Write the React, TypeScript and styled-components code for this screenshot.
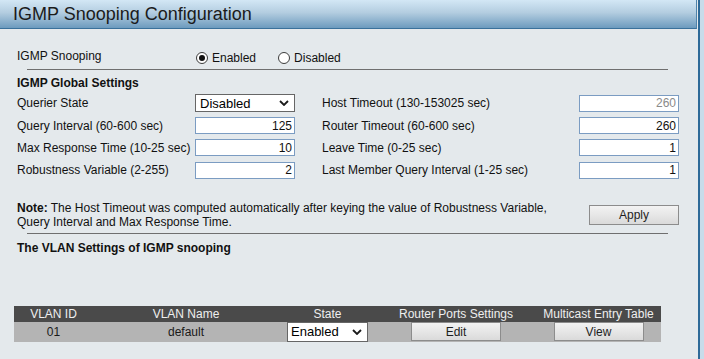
import React from "react";
import styled, { createGlobalStyle } from "styled-components";

const GlobalStyle = createGlobalStyle`
  html, body {
    margin: 0;
    padding: 0;
    background: #e4e9ec;
  }
  body {
    font-family: "Liberation Sans", Arial, sans-serif;
    font-size: 12px;
    color: #111;
  }
  * { box-sizing: border-box; }
`;

const Page = styled.div`
  display: flex;
  width: 704px;
  height: 359px;
  overflow: hidden;
`;

const Main = styled.div`
  width: 698px;
  display: flex;
  flex-direction: column;
  background: #e4e9ec;
`;

const Edge = styled.div`
  width: 2px;
  background: #2e6a98;
`;

const Strip = styled.div`
  flex: 1;
  background: #c8dcea;
`;

const TitleBar = styled.div`
  width: 697px;
  height: 29px;
  border-bottom: 1px solid #3a719b;
  border-right: 1px solid #4f83aa;
  background: linear-gradient(to bottom, #d3e7f5 0%, #b3cde0 45%, #6d9bbe 100%);
  display: flex;
  align-items: center;
`;

const TitleText = styled.h1`
  margin: 0;
  padding-left: 13px;
  font-size: 18px;
  font-weight: normal;
  line-height: 27px;
  color: #1b1b1b;
`;

const Content = styled.div`
  padding-left: 14px;
  display: flex;
  flex-direction: column;
`;

const Form = styled.div`
  padding-left: 3px;
  display: flex;
  flex-direction: column;
`;

const SnoopRow = styled.div`
  display: flex;
  align-items: center;
  height: 20px;
  margin-top: 17px;
`;

const RowLabel = styled.div`
  width: 179px;
`;

const RadioGroup = styled.div`
  display: flex;
  align-items: center;
  margin-top: 3px;
  gap: 22px;
`;

const RadioOption = styled.label`
  display: flex;
  align-items: center;
  gap: 4px;
`;

const RadioCircle = styled.span<{ $checked?: boolean }>`
  width: 12px;
  height: 12px;
  border-radius: 50%;
  border: 1px solid #3c3c3c;
  background: #fff;
  display: flex;
  align-items: center;
  justify-content: center;
  &::after {
    content: "";
    width: 6px;
    height: 6px;
    border-radius: 50%;
    background: ${(p) => (p.$checked ? "#111" : "transparent")};
  }
`;

const Rule = styled.div<{ $mt: number }>`
  margin-top: ${(p) => p.$mt}px;
  margin-left: 10px;
  width: 641px;
  height: 1px;
  background: #6f6f6f;
`;

const SectionTitle = styled.div<{ $mt: number }>`
  margin-top: ${(p) => p.$mt}px;
  font-weight: bold;
  line-height: 14px;
`;

const SettingsGrid = styled.div`
  margin-top: 2px;
  display: grid;
  grid-template-columns: 178px 100px 284px 100px;
  grid-auto-rows: 22.4px;
  align-items: center;
`;

const FieldLabel = styled.div<{ $indent?: boolean }>`
  padding-left: ${(p) => (p.$indent ? "27px" : "0")};
  white-space: nowrap;
`;

const TextInput = styled.input<{ $muted?: boolean }>`
  width: 100px;
  height: 17px;
  border: 1px solid #7b9cc2;
  background: #fff;
  text-align: right;
  padding: 0 2px;
  font-family: "Liberation Sans", Arial, sans-serif;
  font-size: 12px;
  color: ${(p) => (p.$muted ? "#8a8a8a" : "#111")};
  outline: none;
`;

const SelectWrap = styled.div<{ $w: number; $h: number }>`
  position: relative;
  width: ${(p) => p.$w}px;
  height: ${(p) => p.$h}px;
`;

const Select = styled.select<{ $pl: number }>`
  appearance: none;
  -webkit-appearance: none;
  width: 100%;
  height: 100%;
  border: 1px solid #666;
  border-radius: 0;
  background: #fff;
  padding: 0 0 0 ${(p) => p.$pl}px;
  font-family: "Liberation Sans", Arial, sans-serif;
  font-size: 13px;
  color: #000;
  outline: none;
`;

const ChevronIcon = styled.svg`
  position: absolute;
  right: 6px;
  top: 50%;
  margin-top: -3px;
  pointer-events: none;
`;

const Chevron = () => (
  <ChevronIcon width="10" height="6" viewBox="0 0 10 6">
    <path d="M1 1 L5 5 L9 1" fill="none" stroke="#1a1a1a" strokeWidth="1.8" />
  </ChevronIcon>
);

const NoteRow = styled.div`
  margin-top: 19px;
  display: flex;
  align-items: flex-start;
  width: 662px;
`;

const NoteText = styled.div`
  width: 555px;
  line-height: 14px;
  b { font-weight: bold; }
`;

const Button = styled.button<{ $h: number }>`
  width: 90px;
  height: ${(p) => p.$h}px;
  border: 1px solid #8c8c8c;
  border-radius: 0;
  background: linear-gradient(to bottom, #f3f3f3, #dadada);
  font-family: "Liberation Sans", Arial, sans-serif;
  font-size: 12px;
  color: #1e1e1e;
  padding: 0;
`;

const ApplyButton = styled(Button)`
  margin-left: auto;
  margin-top: 4px;
`;

const VlanTable = styled.div`
  margin-top: 51px;
  width: 647px;
  display: grid;
  grid-template-columns: 79px 186px 97px 160px 125px;
`;

const HeadCell = styled.div`
  height: 16px;
  line-height: 16px;
  background: #4a4a4a;
  color: #efefef;
  text-align: center;
  white-space: nowrap;
`;

const DataCell = styled.div`
  height: 20px;
  background: #b4b4b4;
  display: flex;
  align-items: center;
  justify-content: center;
  color: #1a1a1a;
`;

export default function App() {
  return (
    <>
      <GlobalStyle />
      <Page>
        <Main>
          <TitleBar>
            <TitleText>IGMP Snooping Configuration</TitleText>
          </TitleBar>
          <Content>
            <Form>
              <SnoopRow>
                <RowLabel>IGMP Snooping</RowLabel>
                <RadioGroup>
                  <RadioOption>
                    <RadioCircle $checked />
                    Enabled
                  </RadioOption>
                  <RadioOption>
                    <RadioCircle />
                    Disabled
                  </RadioOption>
                </RadioGroup>
              </SnoopRow>
              <Rule $mt={3} />
              <SectionTitle $mt={6}>IGMP Global Settings</SectionTitle>
              <SettingsGrid>
                <FieldLabel>Querier State</FieldLabel>
                <SelectWrap $w={100} $h={18}>
                  <Select $pl={4} defaultValue="Disabled">
                    <option>Disabled</option>
                    <option>Enabled</option>
                  </Select>
                  <Chevron />
                </SelectWrap>
                <FieldLabel $indent>Host Timeout (130-153025 sec)</FieldLabel>
                <TextInput $muted readOnly defaultValue="260" />

                <FieldLabel>Query Interval (60-600 sec)</FieldLabel>
                <TextInput defaultValue="125" />
                <FieldLabel $indent>Router Timeout (60-600 sec)</FieldLabel>
                <TextInput defaultValue="260" />

                <FieldLabel>Max Response Time (10-25 sec)</FieldLabel>
                <TextInput defaultValue="10" />
                <FieldLabel $indent>Leave Time (0-25 sec)</FieldLabel>
                <TextInput defaultValue="1" />

                <FieldLabel>Robustness Variable (2-255)</FieldLabel>
                <TextInput defaultValue="2" />
                <FieldLabel $indent>Last Member Query Interval (1-25 sec)</FieldLabel>
                <TextInput defaultValue="1" />
              </SettingsGrid>
              <NoteRow>
                <NoteText>
                  <b>Note:</b> The Host Timeout was computed automatically after keying the value of
                  Robustness Variable, Query Interval and Max Response Time.
                </NoteText>
                <ApplyButton $h={20}>Apply</ApplyButton>
              </NoteRow>
              <Rule $mt={4} />
              <SectionTitle $mt={7}>The VLAN Settings of IGMP snooping</SectionTitle>
            </Form>
            <VlanTable>
              <HeadCell>VLAN ID</HeadCell>
              <HeadCell>VLAN Name</HeadCell>
              <HeadCell>State</HeadCell>
              <HeadCell>Router Ports Settings</HeadCell>
              <HeadCell>Multicast Entry Table</HeadCell>
              <DataCell>01</DataCell>
              <DataCell>default</DataCell>
              <DataCell>
                <SelectWrap $w={81} $h={20}>
                  <Select $pl={3} defaultValue="Enabled">
                    <option>Enabled</option>
                    <option>Disabled</option>
                  </Select>
                  <Chevron />
                </SelectWrap>
              </DataCell>
              <DataCell>
                <Button $h={19}>Edit</Button>
              </DataCell>
              <DataCell>
                <Button $h={19}>View</Button>
              </DataCell>
            </VlanTable>
          </Content>
        </Main>
        <Edge />
        <Strip />
      </Page>
    </>
  );
}
